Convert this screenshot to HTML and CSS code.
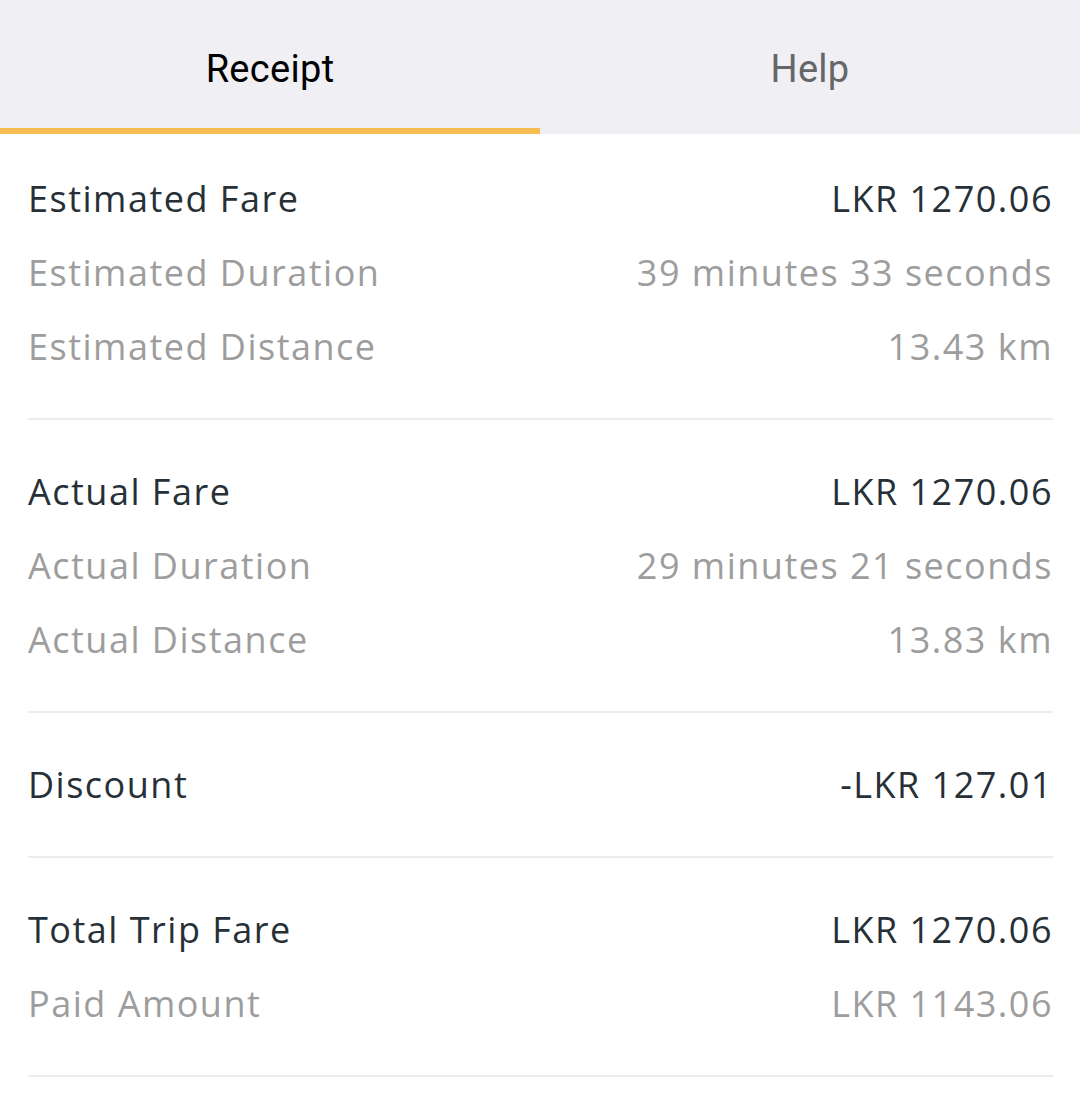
FILE: index.html
```html
<!DOCTYPE html>
<html lang="en">
<head>
  <meta charset="UTF-8" />
  <meta name="viewport" content="width=device-width, initial-scale=1.0"/>
  <title>Trip Receipt</title>
  <link rel="stylesheet" href="styles.css">
</head>
<body>
  <!-- Tabs -->
  <div class="tabs">
    <div class="tab active">Receipt</div>
    <div class="tab">Help</div>
  </div>
  <!-- Receipt -->
  <div class="receipt">
    <div class="section first">
      <div class="row main"><span>Estimated Fare</span><span>LKR 1270.06</span></div>
      <div class="row"><span>Estimated Duration</span><span>39 minutes 33 seconds</span></div>
      <div class="row"><span>Estimated Distance</span><span>13.43 km</span></div>
    </div>
    <div class="section">
      <div class="row main"><span>Actual Fare</span><span>LKR 1270.06</span></div>
      <div class="row"><span>Actual Duration</span><span>29 minutes 21 seconds</span></div>
      <div class="row"><span>Actual Distance</span><span>13.83 km</span></div>
    </div>
    <div class="section">
      <div class="row main"><span>Discount</span><span>-LKR 127.01</span></div>
    </div>
    <div class="section">
      <div class="row main"><span>Total Trip Fare</span><span>LKR 1270.06</span></div>
      <div class="row"><span>Paid Amount</span><span>LKR 1143.06</span></div>
    </div>
  </div>
</body>
</html>
```

FILE: styles.css
```css
* { box-sizing: border-box; margin: 0; padding: 0; }
body {
  font-family: "Open Sans", Arial, sans-serif;
  background-color: #ffffff;
  margin: 0;
}
/* Tabs */
.tabs {
  display: flex;
  background: #efeff4;
}
.tab {
  flex: 1;
  height: 134px;
  padding-top: 10px;
  display: flex;
  align-items: center;
  justify-content: center;
  font-family: Roboto, Arial, sans-serif;
  font-size: 38px;
  letter-spacing: 0.3px;
  color: #666668;
  border-bottom: 6px solid transparent;
}
.tab.active {
  color: #000;
  border-bottom-color: #f7bc4f;
}

/* Receipt */
.receipt {
  padding: 0 27px 0 28px;
}
.section {
  padding: 34px 0 35px;
  border-bottom: 2px solid #ededf1;
}
.section.first { padding-top: 27px; }
.row {
  height: 74px;
  display: flex;
  align-items: center;
  justify-content: space-between;
  font-size: 36px;
  letter-spacing: 1.5px;
  color: #9d9d9d;
}
.row.main { color: #263036; }
```
